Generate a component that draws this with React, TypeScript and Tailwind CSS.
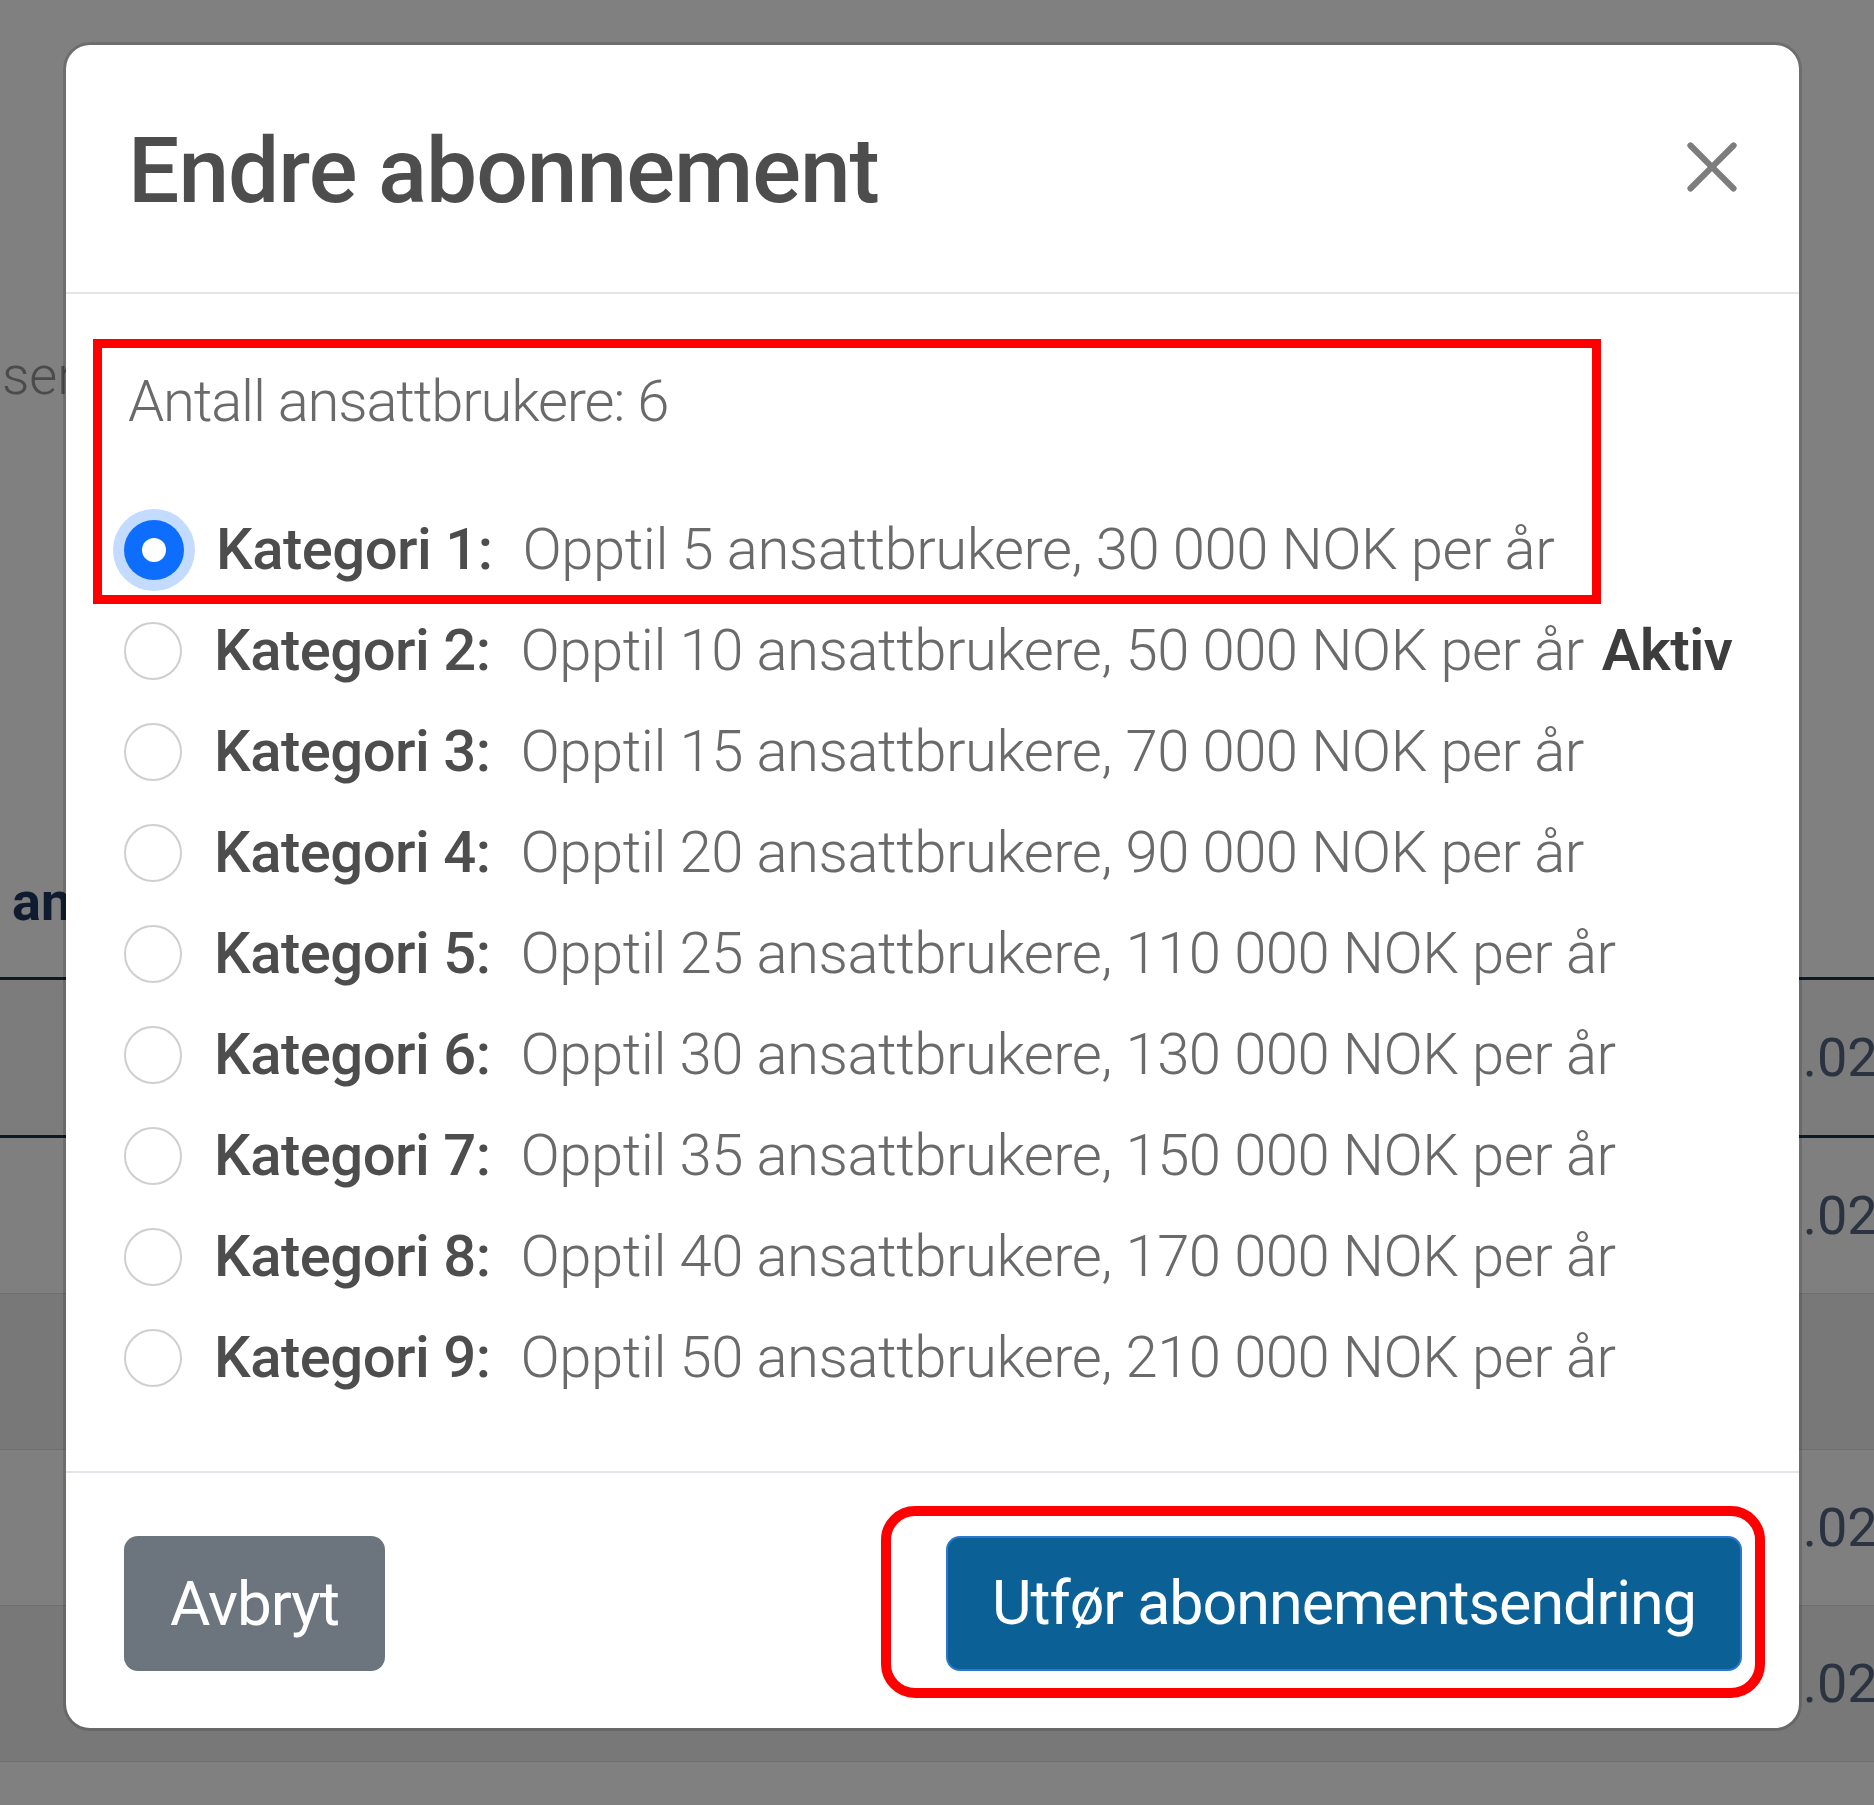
import React from 'react';

const FONT = "font-['Roboto','Noto_Sans',sans-serif]";

const CATEGORIES = [
  {n: 1, users: 5, price: '30 000'},
  {n: 2, users: 10, price: '50 000', active: true},
  {n: 3, users: 15, price: '70 000'},
  {n: 4, users: 20, price: '90 000'},
  {n: 5, users: 25, price: '110 000'},
  {n: 6, users: 30, price: '130 000'},
  {n: 7, users: 35, price: '150 000'},
  {n: 8, users: 40, price: '170 000'},
  {n: 9, users: 50, price: '210 000'}
];

// striped table rows behind the backdrop, only the edges show
const BG_ROWS = [
  {date: '01.02.2025', shade: 'bg-[#7c7c7c]'},
  {date: '01.02.2025', shade: 'bg-[#7f7f7f]'},
  {date: '', shade: 'bg-[#787878]'},
  {date: '01.02.2025', shade: 'bg-[#7f7f7f]'},
  {date: '01.02.2025', shade: 'bg-[#787878]'}
];

function Radio({checked}: {checked?: boolean}) {
  if (checked) {
    return (
      <span className="flex size-[60px] shrink-0 items-center justify-center rounded-full bg-[#0d6efd] ring-[11px] ring-[#c2dbfe]">
        <span className="size-[24px] rounded-full bg-white" />
      </span>
    );
  }
  return <span className="size-[58px] shrink-0 rounded-full border-2 border-[#cfcfcf] bg-white" />;
}

function CloseIcon() {
  return (
    <svg viewBox="0 0 16 16" className="size-[60px]" fill="#7d7d7d" aria-hidden>
      <path d="M.293.293a1 1 0 0 1 1.414 0L8 6.586 14.293.293a1 1 0 1 1 1.414 1.414L9.414 8l6.293 6.293a1 1 0 0 1-1.414 1.414L8 9.414l-6.293 6.293a1 1 0 0 1-1.414-1.414L6.586 8 .293 1.707a1 1 0 0 1 0-1.414z" transform="translate(8 8) scale(0.82) translate(-8 -8)" />
    </svg>
  );
}

function Backdrop() {
  return (
    <div className="flex flex-col pt-[345px]">
      <p className="whitespace-nowrap pl-[2px] text-[54px] font-light leading-[62px] text-[#4b4b4b]">services</p>
      <h2 className="mt-[464px] whitespace-nowrap pl-[12px] text-[54px] font-bold leading-[62px] text-[#0f1b2e]">
        ansatte
      </h2>
      <div className="mt-[44px] flex flex-col">
        {BG_ROWS.map((row, i) => (
          <div
            key={i}
            className={
              i === 0
                ? `flex h-[161px] items-center border-y-[3px] border-[#0c1a24] ${row.shade}`
                : `flex h-[156px] items-center border-b border-[#6e6e6e] ${row.shade}`
            }
          >
            <span className="whitespace-nowrap pl-[1742px] text-[54px] text-[#2b3340]">{row.date}</span>
          </div>
        ))}
      </div>
    </div>
  );
}

function SubscriptionModal() {
  return (
    <div className="absolute left-[63px] top-[42px] flex w-[1739px] flex-col rounded-[27px] border-[3px] border-[rgba(0,0,0,0.14)] bg-white bg-clip-padding">
      <div className="flex h-[249px] items-center justify-between border-b-2 border-[#e2e6ea] pl-[62px] pr-[57px]">
        <h1 className="mt-[6px] text-[91px] font-medium tracking-[-1px] text-[#4d4d4d]">Endre abonnement</h1>
        <button type="button" aria-label="Lukk" className="-mt-[4px]">
          <CloseIcon />
        </button>
      </div>

      <div className="flex flex-col pb-[63px] pl-[58px] pt-[57px]">
        <p className="flex h-[101px] items-center pl-[4px] text-[58px] font-light tracking-[-1.2px] text-[#6a6a6a]">
          Antall ansattbrukere: 6
        </p>
        <ul className="mt-[47px] flex flex-col">
          {CATEGORIES.map((c) => (
            <li key={c.n} className="flex h-[101px] items-center text-[58px] tracking-[-0.5px]">
              <Radio checked={c.n === 1} />
              <span className="ml-[32px] whitespace-nowrap font-medium text-[#4d4d4d]">Kategori {c.n}:</span>
              <span className="ml-[30px] whitespace-nowrap font-light text-[#6a6a6a]">
                Opptil {c.users} ansattbrukere, {c.price} NOK per år
              </span>
              {c.active && <span className="ml-[18px] font-semibold text-[#3d3d3d]">Aktiv</span>}
            </li>
          ))}
        </ul>
      </div>

      <div className="flex items-center justify-between border-t-2 border-[#e2e6ea] pb-[57px] pl-[58px] pr-[57px] pt-[63px]">
        <button
          type="button"
          className="flex h-[135px] w-[261px] items-center justify-center rounded-[14px] bg-[#6c757d] text-[62px] tracking-[-1px] text-white"
        >
          Avbryt
        </button>
        <button
          type="button"
          className="flex h-[135px] w-[796px] items-center justify-center rounded-[14px] border-2 border-[#2a78d0] bg-[#0b6196] text-[61px] tracking-[-1px] text-white"
        >
          Utfør abonnementsendring
        </button>
      </div>
    </div>
  );
}

export default function App() {
  return (
    <div className={`relative h-[1805px] w-[1874px] overflow-hidden bg-[#808080] ${FONT}`}>
      <Backdrop />
      <SubscriptionModal />
      {/* annotation boxes drawn over the screenshot */}
      <div className="pointer-events-none absolute left-[93px] top-[339px] h-[265px] w-[1508px] border-[9px] border-[#ff0000]" />
      <div className="pointer-events-none absolute left-[881px] top-[1506px] h-[192px] w-[884px] rounded-[34px] border-[10px] border-[#ff0000]" />
    </div>
  );
}
